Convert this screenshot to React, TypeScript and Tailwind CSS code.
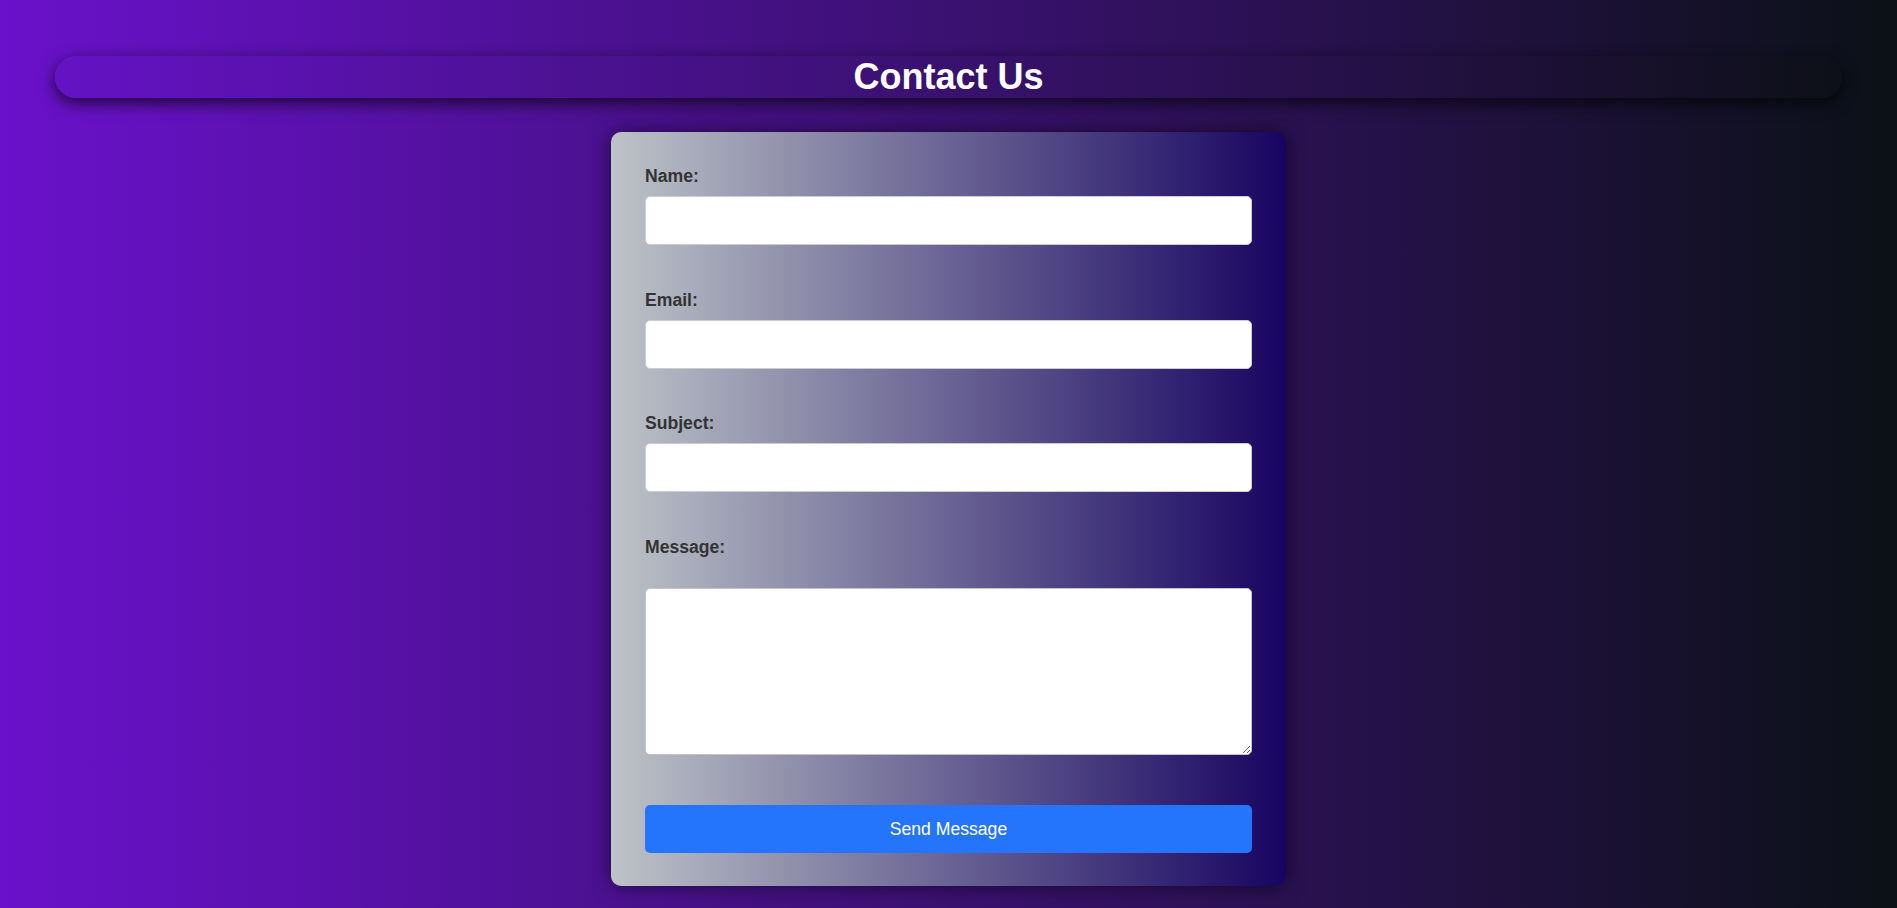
import React from "react";

const font = { fontFamily: '"Liberation Sans", Arial, Helvetica, sans-serif' };

function Field({ label, id }: { label: string; id: string }) {
  return (
    <div className="mb-[44.5px]">
      <label htmlFor={id} className="block text-[17.6px] leading-[20px] font-bold text-[#333333] mb-[10px]">
        {label}
      </label>
      <input
        id={id}
        type="text"
        className="block w-full h-[49px] bg-white border border-[#cccccc] rounded-[5px] px-[12px] text-[16px] outline-none"
      />
    </div>
  );
}

export default function App() {
  return (
    <div
      style={font}
      className="min-h-screen w-full bg-[linear-gradient(to_right,#6a11cb,#0b1117)] pt-[56px] pb-[22px]"
    >
      <header className="mx-[55px] h-[42px] rounded-full bg-[linear-gradient(to_right,#6512c4,#0d1018)] shadow-[0_5px_16px_rgba(0,0,0,0.7)] flex items-center justify-center">
        <h1 className="text-[36px] leading-[42px] font-bold text-white">Contact Us</h1>
      </header>

      <div className="mt-[34px] mx-auto w-[675px] rounded-[10px] bg-[linear-gradient(to_right,#bdc3c7,#170461)] shadow-[0_0_20px_rgba(0,0,0,0.55)] px-[34px] pt-[34px] pb-[33px]">
        <form onSubmit={(e) => e.preventDefault()}>
          <Field label="Name:" id="name" />
          <Field label="Email:" id="email" />
          <Field label="Subject:" id="subject" />
          <div>
            <label htmlFor="message" className="block text-[17.6px] leading-[20px] font-bold text-[#333333] mb-[31px]">
              Message:
            </label>
            <textarea
              id="message"
              className="block w-full h-[167.5px] bg-white border border-[#c4c4c4] rounded-[5px] px-[12px] py-[10px] text-[16px] outline-none"
            />
          </div>
          <button
            type="submit"
            className="mt-[50px] block w-full h-[48px] rounded-[5px] bg-[#2575fc] text-white text-[17.6px] leading-[20px]"
          >
            Send Message
          </button>
        </form>
      </div>
    </div>
  );
}
